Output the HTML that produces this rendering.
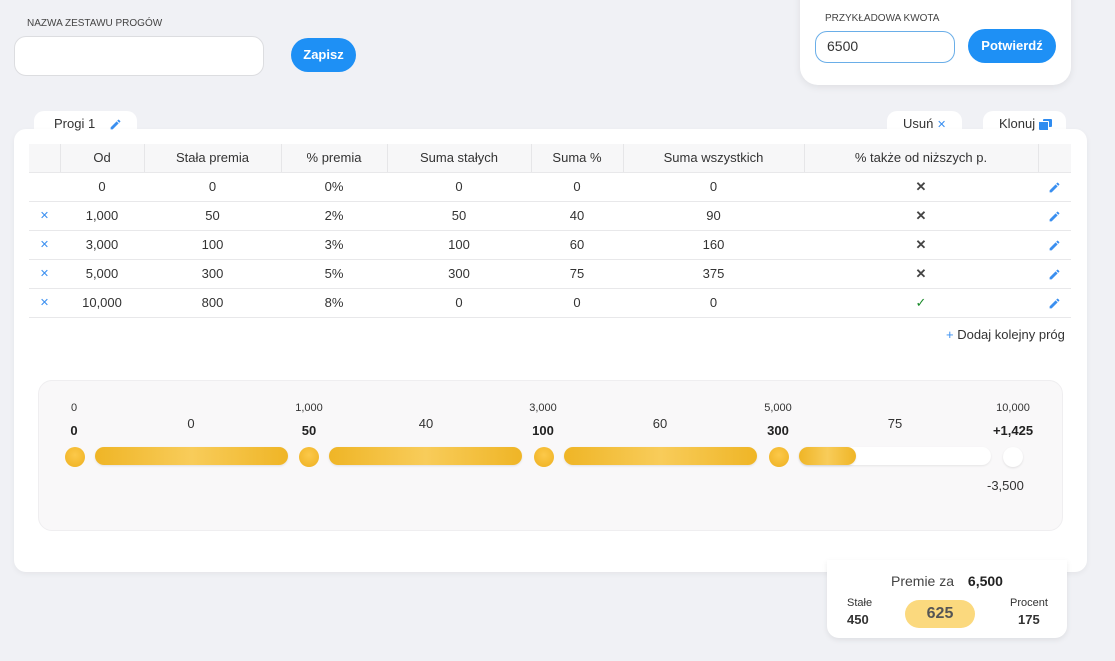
<!DOCTYPE html><html><head><meta charset="utf-8"><style>
*{box-sizing:border-box;margin:0;padding:0}
body{width:1115px;height:661px;background:#f0f1f5;font-family:"Liberation Sans",sans-serif;color:#333;position:relative;overflow:hidden}
.abs{position:absolute}
.lbl{font-size:10px;color:#444}
.btn{background:#1e90f5;color:#fff;font-weight:bold;font-size:13px;border-radius:17px;text-align:center}
.card{background:#fff;border-radius:12px}
table{border-collapse:collapse;position:absolute;left:29px;top:144px;width:1042px;font-size:13px;color:#333}
td,th{text-align:center;height:29px;border-bottom:1px solid #e8e8ea;font-weight:normal}
th{background:#f7f7f8;height:28px;border-left:1px solid #e6e6e8}
th:first-child{border-left:none}
.x{color:#3a8ff0;font-size:11px}
.gx{color:#444;font-size:13px;font-weight:bold}
svg.pen{width:13px;height:13px;vertical-align:middle}
.dot{position:absolute;width:20px;height:20px;border-radius:50%;background:radial-gradient(circle at 50% 40%,#fcc94a,#eeb020);top:447px}
.bar{position:absolute;height:18px;border-radius:9px;top:447px;background:linear-gradient(90deg,#efb526,#f8cc5a 50%,#efb526);box-shadow:0 1px 2px rgba(0,0,0,.1)}
.s{position:absolute;font-size:11px;color:#333;top:402px;transform:translateX(-50%)}
.b{position:absolute;font-size:13px;font-weight:bold;color:#222;top:423px;transform:translateX(-50%)}
.m{position:absolute;font-size:13px;color:#333;top:416px;transform:translateX(-50%)}
</style></head><body>
<svg width="0" height="0" style="position:absolute"><defs><symbol id="p" viewBox="0 0 24 24"><path fill="#3a8ff0" d="M3 17.25V21h3.75L17.81 9.94l-3.75-3.75L3 17.25zM20.71 7.04a1 1 0 000-1.41l-2.34-2.34a1 1 0 00-1.41 0l-1.83 1.83 3.75 3.75 1.83-1.83z"/></symbol></defs></svg>
<div class="abs lbl" style="left:27px;top:18px">NAZWA ZESTAWU PROGÓW</div>
<div class="abs" style="left:14px;top:36px;width:250px;height:40px;background:#fff;border:1px solid #dcdde0;border-radius:12px"></div>
<div class="abs btn" style="left:291px;top:38px;width:65px;height:34px;line-height:34px">Zapisz</div>

<div class="abs card" style="left:800px;top:-12px;width:271px;height:97px;border-radius:0 0 18px 18px;box-shadow:0 2px 8px rgba(0,0,0,.08)"></div>
<div class="abs lbl" style="left:825px;top:13px">PRZYKŁADOWA KWOTA</div>
<div class="abs" style="left:815px;top:31px;width:140px;height:32px;border:1.5px solid #6aaee8;border-radius:12px;font-size:14px;padding:6px 11px;background:#fff">6500</div>
<div class="abs btn" style="left:968px;top:29px;width:88px;height:34px;line-height:34px">Potwierdź</div>

<div class="abs card" style="left:34px;top:111px;width:103px;height:30px;border-radius:10px 10px 0 0"></div>
<div class="abs card" style="left:887px;top:111px;width:75px;height:30px;border-radius:10px 10px 0 0"></div>
<div class="abs card" style="left:983px;top:111px;width:83px;height:30px;border-radius:10px 10px 0 0"></div>
<div class="abs card" style="left:14px;top:129px;width:1073px;height:443px;box-shadow:0 2px 6px rgba(0,0,0,.05)"></div>
<div class="abs" style="left:54px;top:116px;font-size:13px;line-height:16px">Progi 1 <svg class="pen" style="margin-left:10px"><use href="#p"/></svg></div>
<div class="abs" style="left:903px;top:116px;font-size:13px;line-height:16px">Usuń <span class="x">✕</span></div>
<div class="abs" style="left:999px;top:116px;font-size:13px;line-height:16px">Klonuj</div>
<div class="abs" style="left:1043px;top:119px;width:9px;height:8px;background:#2f8cf0;border-radius:1px"></div>
<div class="abs" style="left:1040px;top:122px;width:9px;height:8px;background:#2f8cf0;border-radius:1px;border-top:1.5px solid #fff;border-right:1.5px solid #fff;box-sizing:content-box;margin:-1.5px"></div>

<table>
<tr><th style="width:31px"></th><th style="width:84px">Od</th><th style="width:137px">Stała premia</th><th style="width:106px">% premia</th><th style="width:144px">Suma stałych</th><th style="width:92px">Suma %</th><th style="width:181px">Suma wszystkich</th><th style="width:234px">% także od niższych p.</th><th></th></tr>
<tr><td></td><td>0</td><td>0</td><td>0%</td><td>0</td><td>0</td><td>0</td><td class="gx">✕</td><td><svg class="pen"><use href="#p"/></svg></td></tr>
<tr><td class="x">✕</td><td>1,000</td><td>50</td><td>2%</td><td>50</td><td>40</td><td>90</td><td class="gx">✕</td><td><svg class="pen"><use href="#p"/></svg></td></tr>
<tr><td class="x">✕</td><td>3,000</td><td>100</td><td>3%</td><td>100</td><td>60</td><td>160</td><td class="gx">✕</td><td><svg class="pen"><use href="#p"/></svg></td></tr>
<tr><td class="x">✕</td><td>5,000</td><td>300</td><td>5%</td><td>300</td><td>75</td><td>375</td><td class="gx">✕</td><td><svg class="pen"><use href="#p"/></svg></td></tr>
<tr><td class="x">✕</td><td>10,000</td><td>800</td><td>8%</td><td>0</td><td>0</td><td>0</td><td style="color:#1a8a2a">✓</td><td><svg class="pen"><use href="#p"/></svg></td></tr>
</table>
<div class="abs" style="left:946px;top:327px;font-size:13px"><span style="color:#3a8ff0">+</span> Dodaj kolejny próg</div>

<div class="abs" style="left:38px;top:380px;width:1025px;height:151px;background:#f9f8f9;border:1px solid #efeef0;border-radius:14px"></div>
<div class="s" style="left:74px">0</div><div class="b" style="left:74px">0</div>
<div class="s" style="left:309px">1,000</div><div class="b" style="left:309px">50</div>
<div class="s" style="left:543px">3,000</div><div class="b" style="left:543px">100</div>
<div class="s" style="left:778px">5,000</div><div class="b" style="left:778px">300</div>
<div class="s" style="left:1013px">10,000</div><div class="b" style="left:1013px">+1,425</div>
<div class="m" style="left:191px">0</div><div class="m" style="left:426px">40</div><div class="m" style="left:660px">60</div><div class="m" style="left:895px">75</div>
<div class="dot" style="left:65px"></div><div class="dot" style="left:299px"></div><div class="dot" style="left:534px"></div><div class="dot" style="left:769px"></div>
<div class="abs" style="left:1003px;top:447px;width:20px;height:20px;border-radius:50%;background:#fff;box-shadow:0 1px 2px rgba(0,0,0,.1)"></div>
<div class="bar" style="left:95px;width:193px"></div>
<div class="bar" style="left:329px;width:193px"></div>
<div class="bar" style="left:564px;width:193px"></div>
<div class="abs" style="left:799px;top:447px;width:192px;height:18px;border-radius:9px;background:#fff;box-shadow:0 1px 2px rgba(0,0,0,.08)"></div>
<div class="bar" style="left:799px;width:57px"></div>
<div class="abs" style="left:987px;top:478px;font-size:13px">-3,500</div>

<div class="abs card" style="left:827px;top:560px;width:240px;height:78px;border-radius:0 0 12px 12px;box-shadow:0 2px 6px rgba(0,0,0,.08)"></div>
<div class="abs" style="left:891px;top:573px;font-size:14px;color:#444">Premie za <b style="margin-left:10px;color:#222">6,500</b></div>
<div class="abs" style="left:847px;top:597px;font-size:11px">Stałe</div>
<div class="abs" style="left:847px;top:612px;font-size:13px;font-weight:bold">450</div>
<div class="abs" style="left:905px;top:600px;width:70px;height:28px;border-radius:14px;background:#fbd97e;text-align:center;line-height:28px;font-size:16px;font-weight:bold;color:#555">625</div>
<div class="abs" style="left:1010px;top:597px;font-size:11px">Procent</div>
<div class="abs" style="left:1018px;top:612px;font-size:13px;font-weight:bold">175</div>
</body></html>
